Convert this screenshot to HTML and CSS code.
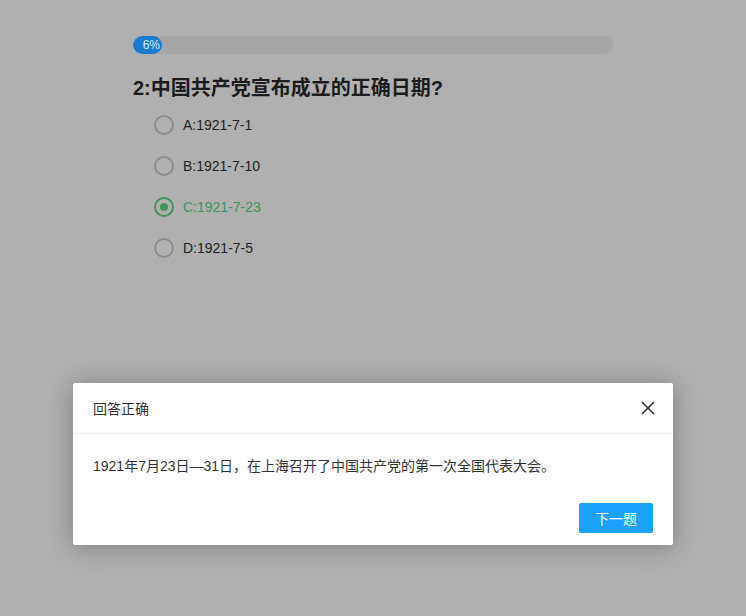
FILE: index.html
```html
<!DOCTYPE html>
<html>
<head>
<meta charset="utf-8">
<link rel="stylesheet" href="styles.css">
</head>
<body>
<div class="page">
  <div class="progress"><div class="fill" style="width:29px"><span class="pct">6%</span></div></div>
  <h2 class="title">2:中国共产党宣布成立的正确日期?</h2>
  <ul class="options">
    <li class="opt"><span class="radio"></span><span class="label">A:1921-7-1</span></li>
    <li class="opt"><span class="radio"></span><span class="label">B:1921-7-10</span></li>
    <li class="opt checked"><span class="radio"><span class="dot"></span></span><span class="label">C:1921-7-23</span></li>
    <li class="opt"><span class="radio"></span><span class="label">D:1921-7-5</span></li>
  </ul>
</div>
<div class="dialog">
  <div class="d-head">
    <span class="d-title">回答正确</span>
    <svg class="close" width="14" height="14" viewBox="0 0 14 14"><path d="M1 1L13 13M13 1L1 13" stroke="#333" stroke-width="1.6" fill="none"/></svg>
  </div>
  <div class="d-body">1921年7月23日—31日，在上海召开了中国共产党的第一次全国代表大会。</div>
  <div class="d-foot"><button class="btn">下一题</button></div>
</div>
</body>
</html>
```
FILE: styles.css
```css
html, body { margin: 0; padding: 0; }
body {
  background: #b0b0b0;
  width: 746px;
  height: 616px;
  overflow: hidden;
  font-family: "Liberation Sans", "Noto Sans CJK SC", sans-serif;
  position: relative;
}
.page {
  width: 480px;
  margin: 0 auto;
  padding-top: 36px;
}
.progress {
  height: 18px;
  border-radius: 9px;
  background: #a7a7a7;
  overflow: hidden;
}
.fill {
  height: 18px;
  background: #1b7ccf;
  border-radius: 9px;
  display: flex;
  align-items: center;
  justify-content: flex-end;
  padding-right: 2px;
  box-sizing: border-box;
}
.pct { color: #d8e6f2; font-size: 12px; line-height: 18px; }
.title {
  margin: 22px 0 0 0;
  font-size: 20px;
  font-weight: bold;
  color: #1c1c1c;
  line-height: 24px;
}
.options {
  list-style: none;
  margin: 0;
  padding: 4px 0 0 21px;
}
.opt {
  display: flex;
  align-items: center;
  height: 41px;
  font-size: 14px;
  color: #222;
}
.radio {
  width: 16px;
  height: 16px;
  border: 2px solid #8c8c8c;
  border-radius: 50%;
  display: flex;
  align-items: center;
  justify-content: center;
  margin-right: 9px;
}
.checked { color: #3d9558; }
.checked .radio { border-color: #3d9558; }
.dot { width: 8px; height: 8px; border-radius: 50%; background: #3d9558; }
.dialog {
  position: absolute;
  left: 73px;
  top: 383px;
  width: 600px;
  height: 162px;
  background: #fff;
  border-radius: 2px;
  box-shadow: 0 2px 24px rgba(0,0,0,0.3);
}
.d-head {
  height: 50px;
  border-bottom: 1px solid #eeeeee;
  display: flex;
  align-items: center;
  justify-content: space-between;
  padding: 0 18px 0 20px;
}
.d-title { font-size: 14px; color: #333; }
.close { display: block; }
.d-body {
  padding: 24px 20px 0 20px;
  font-size: 14px;
  color: #333;
  line-height: 16px;
}
.d-foot {
  display: flex;
  justify-content: flex-end;
  padding: 29px 20px 0 0;
}
.btn {
  width: 74px;
  height: 30px;
  border: none;
  border-radius: 2px;
  background: #1ba1ff;
  color: #fff;
  font-size: 14px;
  font-family: "Liberation Sans", "Noto Sans CJK SC", sans-serif;
  padding: 0;
}
```
